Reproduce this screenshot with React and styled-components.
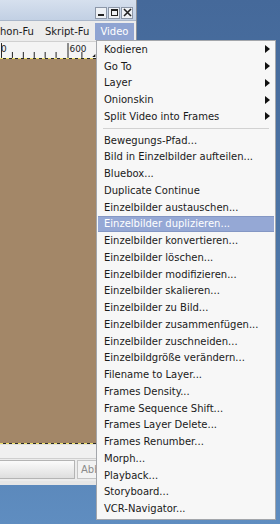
import React from "react";
import styled, { createGlobalStyle } from "styled-components";

const GlobalStyle = createGlobalStyle`
  html, body {
    margin: 0;
    padding: 0;
  }
  body {
    font-family: "DejaVu Sans", "Liberation Sans", sans-serif;
    font-size: 10px;
  }
`;

const submenus = ["Kodieren", "Go To", "Layer", "Onionskin", "Split Video into Frames"];

const entries = [
  "Bewegungs-Pfad...",
  "Bild in Einzelbilder aufteilen...",
  "Bluebox...",
  "Duplicate Continue",
  "Einzelbilder austauschen...",
  "Einzelbilder duplizieren...",
  "Einzelbilder konvertieren...",
  "Einzelbilder löschen...",
  "Einzelbilder modifizieren...",
  "Einzelbilder skalieren...",
  "Einzelbilder zu Bild...",
  "Einzelbilder zusammenfügen...",
  "Einzelbilder zuschneiden...",
  "Einzelbildgröße verändern...",
  "Filename to Layer...",
  "Frames Density...",
  "Frame Sequence Shift...",
  "Frames Layer Delete...",
  "Frames Renumber...",
  "Morph...",
  "Playback...",
  "Storyboard...",
  "VCR-Navigator...",
];

const selected = "Einzelbilder duplizieren...";

function Ruler() {
  const minor = [12, 23, 34, 45, 56, 82];
  return (
    <svg width="137" height="16" viewBox="0 0 137 16">
      <line x1="1.5" y1="1" x2="1.5" y2="16" stroke="#222" />
      <text x="1" y="10" fontSize="9" fill="#222" fontFamily="DejaVu Sans, sans-serif">0</text>
      {minor.map((x) => (
        <line key={x} x1={x + 0.5} y1="10" x2={x + 0.5} y2="16" stroke="#222" />
      ))}
      <line x1="68.5" y1="1" x2="68.5" y2="16" stroke="#222" />
      <text x="70" y="10" fontSize="9" fill="#222" fontFamily="DejaVu Sans, sans-serif">600</text>
      <polygon points="93,15 96,12 96,15" fill="#111" />
    </svg>
  );
}

function Arrow() {
  return (
    <svg width="5" height="8" viewBox="0 0 5 8">
      <polygon points="0,0 5,4 0,8" fill="#111" />
    </svg>
  );
}

export default function App() {
  return (
    <>
      <GlobalStyle />
      <Desktop>
        <Window>
          <TitleBar>
            <WinButtons>
              <WinButton>
                <svg width="9" height="9" viewBox="0 0 9 9">
                  <rect x="1" y="6" width="6" height="2" fill="#222" />
                </svg>
              </WinButton>
              <WinButton>
                <svg width="9" height="9" viewBox="0 0 9 9">
                  <rect x="1.5" y="1.5" width="6" height="6" fill="none" stroke="#222" />
                  <rect x="1" y="1" width="7" height="2" fill="#222" />
                </svg>
              </WinButton>
              <WinButton>
                <svg width="9" height="9" viewBox="0 0 9 9">
                  <path d="M1 1 L8 8 M8 1 L1 8" stroke="#222" strokeWidth="1.6" />
                </svg>
              </WinButton>
            </WinButtons>
          </TitleBar>
          <MenuBar>
            <BarItem>hon-Fu</BarItem>
            <BarItem>Skript-Fu</BarItem>
            <BarItem $active>Video</BarItem>
          </MenuBar>
          <RulerBar>
            <Ruler />
          </RulerBar>
          <Canvas />
          <StatusStrip />
          <StatusRow>
            <Field />
            <SmallButton>Abb</SmallButton>
          </StatusRow>
          <WindowFoot />
        </Window>

        <Menu>
          {submenus.map((s) => (
            <Item key={s}>
              <span>{s}</span>
              <Arrow />
            </Item>
          ))}
          <Separator />
          {entries.map((e) => (
            <Item key={e} $active={e === selected}>
              <span>{e}</span>
            </Item>
          ))}
        </Menu>
      </Desktop>
    </>
  );
}

const Desktop = styled.div`
  position: relative;
  width: 280px;
  height: 524px;
  overflow: hidden;
  background: linear-gradient(180deg, #45699a 0%, #4f79aa 60%, #5f8dc0 100%);
`;

const Window = styled.div`
  width: 137px;
  height: 485px;
  display: flex;
  flex-direction: column;
  background: #ececec;
  border-right: 1px solid #8a8f98;
  box-sizing: border-box;
`;

const TitleBar = styled.div`
  height: 20px;
  flex: none;
  display: flex;
  justify-content: flex-end;
  align-items: center;
  padding-right: 3px;
  background: linear-gradient(180deg, #d6e0ee 0%, #c2d0e4 100%);
  border-bottom: 1px solid #a9b6c9;
`;

const WinButtons = styled.div`
  display: flex;
  gap: 1px;
  margin-top: 5px;
`;

const WinButton = styled.div`
  width: 10px;
  height: 10px;
  display: flex;
  align-items: center;
  justify-content: center;
  background: #eef1f5;
  border: 1px solid #8c97a8;
`;

const MenuBar = styled.div`
  height: 20px;
  flex: none;
  display: flex;
  align-items: stretch;
  background: #ececec;
  color: #1a1a1a;
`;

const BarItem = styled.div`
  display: flex;
  align-items: center;
  padding: 0 5.5px;
  margin: 2px 0 1px;
  color: ${(p) => (p.$active ? "#ffffff" : "#1a1a1a")};
  background: ${(p) => (p.$active ? "#8fa4d2" : "transparent")};
  &:first-child {
    margin-left: -5.5px;
  }
`;

const RulerBar = styled.div`
  height: 16px;
  flex: none;
  background: #f4f4f4;
  border-top: 1px solid #d0d0d0;
  display: flex;
`;

const Canvas = styled.div`
  height: 386px;
  flex: none;
  box-sizing: border-box;
  background-image: repeating-linear-gradient(90deg, #f0e26a 0 3px, #2a2a2a 3px 6px),
    repeating-linear-gradient(90deg, #f0e26a 0 3px, #2a2a2a 3px 6px);
  background-size: 100% 1px, 100% 1px;
  background-position: 0 0, 0 100%;
  background-repeat: no-repeat;
  background-color: #a38768;
`;

const StatusStrip = styled.div`
  height: 13px;
  flex: none;
  background: #f0f0f0;
  border-top: 1px solid #e0e0e0;
  border-bottom: 1px solid #cfcfcf;
`;

const StatusRow = styled.div`
  height: 21px;
  flex: none;
  display: flex;
  gap: 2px;
  padding-top: 1px;
  background: #ececec;
`;

const Field = styled.div`
  width: 75px;
  height: 19px;
  box-sizing: border-box;
  background: linear-gradient(180deg, #fbfbfb 0%, #dedede 100%);
  border: 1px solid #b4b4b4;
  border-left: none;
`;

const SmallButton = styled.div`
  height: 19px;
  box-sizing: border-box;
  padding: 0 3px;
  display: flex;
  align-items: center;
  color: #8a8a8a;
  background: #f2f2f2;
  border: 1px solid #c4c4c4;
`;

const WindowFoot = styled.div`
  flex: 1;
  background: #e6e6e6;
`;

const Menu = styled.div`
  position: absolute;
  left: 96px;
  top: 40px;
  width: 180px;
  box-sizing: border-box;
  padding: 0 1px 2px;
  background: #f7f7f7;
  border: 1px solid #a3a6ab;
  color: #1a1a1a;
  display: flex;
  flex-direction: column;
`;

const Item = styled.div`
  height: 16.75px;
  display: flex;
  align-items: center;
  justify-content: space-between;
  padding: 0 4px 0 6px;
  white-space: nowrap;
  color: ${(p) => (p.$active ? "#ffffff" : "#1a1a1a")};
  background: ${(p) => (p.$active ? "#95a8d5" : "transparent")};
  border: 1px solid ${(p) => (p.$active ? "#8497c4" : "transparent")};
  border-left: none;
  border-right: none;
  box-sizing: border-box;
`;

const Separator = styled.div`
  height: 7px;
  flex: none;
  margin: 0 5px;
  background: linear-gradient(#d2d2d2, #d2d2d2) center / 100% 1px no-repeat;
`;
